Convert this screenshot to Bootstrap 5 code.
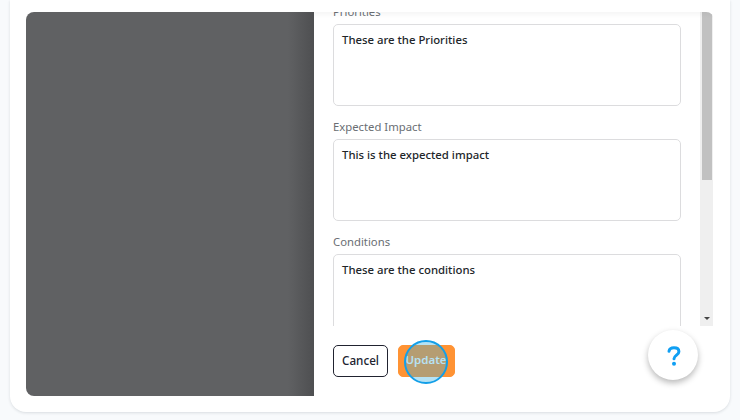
<!DOCTYPE html>
<html lang="en">
<head>
<meta charset="utf-8">
<meta name="viewport" content="width=device-width, initial-scale=1">
<title>Edit details</title>
<link href="https://cdn.jsdelivr.net/npm/bootstrap@5.3.0/dist/css/bootstrap.min.css" rel="stylesheet">
<style>
body { background: #f8fafc; font-family: "Noto Sans", "Open Sans", sans-serif; height: 420px; }
.step-card { width: 720px; height: 412px; margin-left: 10px; padding: 12px 16px 16px; border-radius: 0 0 16px 16px; box-shadow: 0 1px 3px rgba(30,41,59,.14); }
.shot { height: 384px; border-radius: 8px; }
.backdrop-area { width: 288px; background: linear-gradient(to right, #606163 0, #606163 262px, #4e4f51 288px); }
.form-scroll { height: 314px; }
.fields { padding-left: 19px; padding-right: 19px; margin-top: -8px; }
.field-label { font-size: 11.3px; line-height: 16px; color: #6a6e73; padding-bottom: 4px; margin: 0; }
.field-box { height: 82px; min-height: 82px; margin-bottom: 13px; padding: 7px 8px; border: 1px solid #dcdcde; border-radius: 5px; font-size: 11.35px; font-weight: 500; line-height: 16px; color: #212529; resize: none; overflow: hidden; }
.top-shade { height: 6px; background: linear-gradient(rgba(0,0,0,.035), transparent); }
.track { width: 13px; margin-right: 1px; background: #efefef; padding: 0 1px 0 2px; }
.thumb { height: 168px; background: #c1c1c1; }
.arrow-down { width: 6px; height: 3px; margin: 0 auto 6px; background: #444; clip-path: polygon(0 0, 100% 0, 50% 100%); }
.actions { padding: 19px 19px 0; gap: 10px; }
.actions .btn { height: 32px; padding: 0 0 2px; font-size: 11.7px; font-weight: 500; line-height: 28px; border-radius: 5px; }
.btn-cancel { width: 55px; border: 1px solid #212330; color: #212330; background: #fff; }
.btn-update { width: 57px; border: 1px solid #ff9334; color: #fff; background: #ff9334; }
.actions .btn-update { font-weight: 600; font-size: 11.5px; padding-right: 1px; }
.click-ring { width: 44px; height: 44px; left: 5px; top: -6px; border: 2px solid #139fe8; background: rgba(50,174,224,.36); }
.help { width: 50px; height: 50px; right: 16px; bottom: 16px; box-shadow: 0 3px 6px rgba(0,0,0,.28); }
.help svg { margin-top: 2px; margin-left: 1px; }
</style>
</head>
<body class="overflow-hidden">
<main class="step-card bg-white">
  <div class="shot d-flex overflow-hidden position-relative">
    <div class="backdrop-area flex-shrink-0"></div>
    <section class="flex-grow-1 d-flex flex-column bg-white">
      <div class="form-scroll d-flex overflow-hidden position-relative">
        <div class="fields flex-grow-1">
          <label class="field-label d-block" for="priorities">Priorities</label>
          <textarea class="field-box form-control" id="priorities">These are the Priorities</textarea>
          <label class="field-label d-block" for="impact">Expected Impact</label>
          <textarea class="field-box form-control" id="impact">This is the expected impact</textarea>
          <label class="field-label d-block" for="conditions">Conditions</label>
          <textarea class="field-box form-control" id="conditions">These are the conditions</textarea>
        </div>
        <div class="track flex-shrink-0 d-flex flex-column justify-content-between">
          <div class="thumb"></div>
          <div class="arrow-down"></div>
        </div>
        <div class="top-shade position-absolute top-0 start-0 w-100"></div>
      </div>
      <div class="actions d-flex">
        <button type="button" class="btn btn-cancel">Cancel</button>
        <button type="button" class="btn btn-update position-relative">Update<span class="click-ring position-absolute rounded-circle"></span></button>
      </div>
    </section>
    <button type="button" class="help btn bg-white border-0 p-0 rounded-circle position-absolute d-flex align-items-center justify-content-center" aria-label="Help">
      <svg width="14" height="20" viewBox="0 0 14 20" fill="none"><path d="M2 5.2C2.4 3 4.2 1.8 7 1.8c3 0 4.9 1.5 4.9 3.9C11.9 8.9 7 9.4 7 12.8" stroke="#109ff3" stroke-width="3" stroke-linecap="round"/><circle cx="7" cy="17.8" r="2" fill="#109ff3"/></svg>
    </button>
  </div>
</main>
<script src="https://cdn.jsdelivr.net/npm/bootstrap@5.3.0/dist/js/bootstrap.bundle.min.js"></script>
</body>
</html>
